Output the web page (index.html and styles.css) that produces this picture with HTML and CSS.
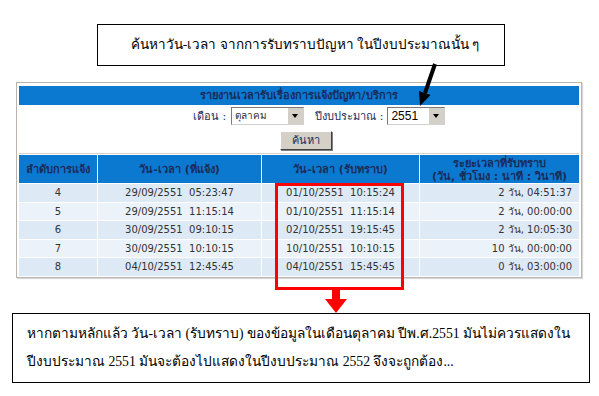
FILE: index.html
```html
<!DOCTYPE html>
<html lang="th">
<head>
<meta charset="utf-8">
<link rel="stylesheet" href="styles.css">
</head>
<body>
<div class="page">
  <div class="note note-top">ค้นหาวัน-เวลา จากการรับทราบปัญหา ในปีงบประมาณนั้น ๆ</div>

  <div class="panel">
    <div class="title">รายงานเวลารับเรื่องการแจ้งปัญหา/บริการ</div>
    <div class="filters">
      <div class="filter-row">
        <span class="lbl">เดือน :</span>
        <span class="select sel-month"><span class="val">ตุลาคม</span><span class="drop"></span></span>
        <span class="lbl lbl-year">ปีงบประมาณ :</span>
        <span class="select sel-year"><span class="val num">2551</span><span class="drop"></span></span>
      </div>
      <div class="btn-row"><span class="btn">ค้นหา</span></div>
    </div>
    <div class="grid">
      <div class="th">ลำดับการแจ้ง</div>
      <div class="th">วัน-เวลา (ที่แจ้ง)</div>
      <div class="th">วัน-เวลา (รับทราบ)</div>
      <div class="th th2">ระยะเวลาที่รับทราบ<br>(วัน, ชั่วโมง : นาที : วินาที)</div>

      <div class="td a">4</div><div class="td a">29/09/2551&nbsp; 05:23:47</div><div class="td a">01/10/2551&nbsp; 10:15:24</div><div class="td a r">2 วัน, 04:51:37</div>
      <div class="td b">5</div><div class="td b">29/09/2551&nbsp; 11:15:14</div><div class="td b">01/10/2551&nbsp; 11:15:14</div><div class="td b r">2 วัน, 00:00:00</div>
      <div class="td a">6</div><div class="td a">30/09/2551&nbsp; 09:10:15</div><div class="td a">02/10/2551&nbsp; 19:15:45</div><div class="td a r">2 วัน, 10:05:30</div>
      <div class="td b">7</div><div class="td b">30/09/2551&nbsp; 10:10:15</div><div class="td b">10/10/2551&nbsp; 10:10:15</div><div class="td b r">10 วัน, 00:00:00</div>
      <div class="td a">8</div><div class="td a">04/10/2551&nbsp; 12:45:45</div><div class="td a">04/10/2551&nbsp; 15:45:45</div><div class="td a r">0 วัน, 03:00:00</div>
    </div>
  </div>

  <div class="note note-bottom">หากตามหลักแล้ว วัน-เวลา (รับทราบ) ของข้อมูลในเดือนตุลาคม ปีพ.ศ.2551 มันไม่ควรแสดงใน<br>ปีงบประมาณ 2551 มันจะต้องไปแสดงในปีงบประมาณ 2552 จึงจะถูกต้อง...</div>

  <div class="redbox"></div>
  <svg class="overlay" width="599" height="396" viewBox="0 0 599 396">
    <line x1="435" y1="64" x2="425" y2="93" stroke="#000" stroke-width="4"/>
    <polygon points="430.5,95 419,91 420,106" fill="#000"/>
    <rect x="332" y="289" width="8" height="12" fill="#f00"/>
    <polygon points="325,299 347,299 336,313" fill="#f00"/>
  </svg>
</div>
</body>
</html>
```

FILE: styles.css
```css
html, body {
  margin: 0;
  padding: 0;
  background: #fff;
}
.page {
  position: relative;
  width: 599px;
  height: 396px;
  padding-top: 24px;
  box-sizing: border-box;
  font-family: Tahoma, "DejaVu Sans", sans-serif;
}
.note {
  border: 1px solid #000;
  box-sizing: border-box;
  color: #000;
  white-space: nowrap;
  font-family: "Liberation Serif", "Angsana New", serif;
}
.note-top {
  margin-left: 97px;
  width: 408px;
  height: 42px;
  font-size: 13.5px;
  line-height: 40px;
  text-align: center;
  padding-left: 8px;
}
.panel {
  margin: 16px 0 0 16px;
  width: 566px;
  border: 1px solid #b9b4ae;
  box-shadow: 1px 1px 1px #d8d8d8;
  padding: 3px 2px 1px 2px;
  box-sizing: border-box;
  background: #fff;
}
.title {
  height: 19px;
  background: #0b79d0;
  color: #1a2c5a;
  font-weight: bold;
  font-size: 11px;
  line-height: 19px;
  text-align: center;
}
.filters {
  height: 49px;
  border-bottom: 1px solid #d9cfc6;
  box-sizing: border-box;
  padding-top: 2px;
}
.filter-row {
  display: flex;
  align-items: center;
  height: 18px;
  padding-left: 174px;
  font-size: 11px;
  color: #1a2c5a;
}
.lbl { margin-right: 5px; }
.lbl-year { margin-left: 11px; margin-right: 4px; }
.select {
  display: flex;
  height: 18px;
  box-sizing: border-box;
  border: 1px solid #7a7a7a;
  border-right-color: #d0d0d0;
  border-bottom-color: #d0d0d0;
  background: #fff;
}
.sel-month { width: 73px; }
.sel-year { width: 58px; }
.select .val {
  flex: 1;
  font-size: 10px;
  line-height: 16px;
  padding-left: 3px;
  color: #333;
}
.select .val.num {
  font-family: "Liberation Sans", Arial, sans-serif;
  font-size: 12px;
  color: #000;
}
.select .drop {
  width: 15px;
  background: #d4d0c8;
  border-left: 1px solid #fff;
  position: relative;
}
.select .drop::after {
  content: "";
  position: absolute;
  left: 4px;
  top: 6px;
  border-left: 3px solid transparent;
  border-right: 3px solid transparent;
  border-top: 4px solid #000;
}
.btn-row {
  display: flex;
  justify-content: center;
  margin-top: 6px;
  padding-left: 14px;
}
.btn {
  width: 52px;
  height: 19px;
  box-sizing: border-box;
  background: #d4d0c8;
  border: 1px solid #fff;
  border-right-color: #404040;
  border-bottom-color: #404040;
  box-shadow: 1px 1px 0 #808080;
  font-size: 11px;
  line-height: 17px;
  text-align: center;
  color: #1a2c5a;
}
.grid {
  margin-top: 1px;
  display: grid;
  grid-template-columns: 78px 163px 157px 1fr;
  column-gap: 1px;
  row-gap: 1px;
}
.th {
  height: 28px;
  background: #0b79d0;
  color: #1a2c5a;
  font-weight: bold;
  font-size: 11px;
  display: flex;
  align-items: center;
  justify-content: center;
  text-align: center;
  line-height: 13px;
  padding-top: 1px;
  box-sizing: border-box;
}
.td {
  height: 17.6px;
  font-size: 10px;
  color: #333;
  text-align: center;
  line-height: 18px;
  white-space: nowrap;
}
.td.r { text-align: right; padding-right: 7px; }
.td.a { background: #dde9f5; }
.td.b { background: #ebf2f9; }
.note-bottom {
  margin: 35px 0 0 12px;
  width: 578px;
  height: 70px;
  font-size: 13.7px;
  line-height: 28px;
  padding: 6px 0 0 14px;
}
.redbox {
  position: absolute;
  left: 275px;
  top: 183px;
  width: 129px;
  height: 107px;
  box-sizing: border-box;
  border: 3px solid #f00;
}
.overlay {
  position: absolute;
  left: 0;
  top: 0;
  pointer-events: none;
}
```
